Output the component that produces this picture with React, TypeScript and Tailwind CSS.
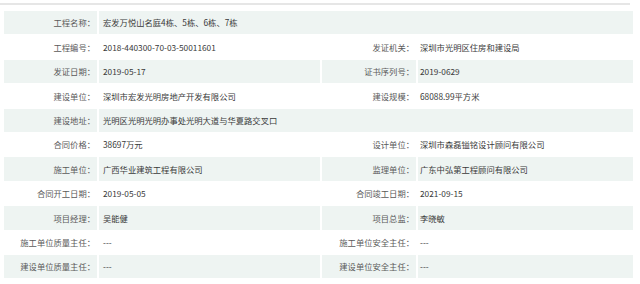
const rows: { label: string; value: string; label2?: string; value2?: string }[] = [
  { label: "工程名称：", value: "宏发万悦山名庭4栋、5栋、6栋、7栋" },
  {
    label: "工程编号：",
    value: "2018-440300-70-03-50011601",
    label2: "发证机关：",
    value2: "深圳市光明区住房和建设局",
  },
  { label: "发证日期：", value: "2019-05-17", label2: "证书序列号：", value2: "2019-0629" },
  {
    label: "建设单位：",
    value: "深圳市宏发光明房地产开发有限公司",
    label2: "建设规模：",
    value2: "68088.99平方米",
  },
  { label: "建设地址：", value: "光明区光明光明办事处光明大道与华夏路交叉口" },
  {
    label: "合同价格：",
    value: "38697万元",
    label2: "设计单位：",
    value2: "深圳市森磊镒铭设计顾问有限公司",
  },
  {
    label: "施工单位：",
    value: "广西华业建筑工程有限公司",
    label2: "监理单位：",
    value2: "广东中弘第工程顾问有限公司",
  },
  { label: "合同开工日期：", value: "2019-05-05", label2: "合同竣工日期：", value2: "2021-09-15" },
  { label: "项目经理：", value: "吴能健", label2: "项目总监：", value2: "李晓敏" },
  { label: "施工单位质量主任：", value: "---", label2: "施工单位安全主任：", value2: "---" },
  { label: "建设单位质量主任：", value: "---", label2: "建设单位安全主任：", value2: "---" },
];

const font = { fontFamily: '"Noto Sans CJK SC", "Noto Sans", sans-serif' };

const App = () => {
  return (
    <div className="h-[284px] w-[640px] bg-white" style={font}>
      <div className="pt-[3px]">
        <div className="h-[2px] w-[630px] bg-[#e6e6e6]" />
      </div>
      <div className="ml-[4px] mt-[6px] grid w-[629px] grid-cols-[93px_221px_94px_1fr] gap-x-[2px] gap-y-px text-[8.3px]">
        {rows.map((row, i) => {
          const bg = i % 2 === 0 ? "bg-[#eef4f2]" : "bg-white";
          return row.label2 ? (
            <div key={i} className="contents">
              <div className={`${bg} flex h-[23.4px] items-center justify-end pr-[2px] text-[#5a5a5a]`}>
                {row.label}
              </div>
              <div className={`${bg} flex h-[23.4px] items-center pl-[4px] text-[#3a3a3a]`}>
                {row.value}
              </div>
              <div className={`${bg} flex h-[23.4px] items-center justify-end pr-[2px] text-[#5a5a5a]`}>
                {row.label2}
              </div>
              <div className={`${bg} flex h-[23.4px] items-center pl-[2px] text-[#3a3a3a]`}>
                {row.value2}
              </div>
            </div>
          ) : (
            <div key={i} className="contents">
              <div className={`${bg} flex h-[23.4px] items-center justify-end pr-[2px] text-[#5a5a5a]`}>
                {row.label}
              </div>
              <div className={`${bg} col-span-3 flex h-[23.4px] items-center pl-[4px] text-[#3a3a3a]`}>
                {row.value}
              </div>
            </div>
          );
        })}
      </div>
    </div>
  );
};

export default App;
